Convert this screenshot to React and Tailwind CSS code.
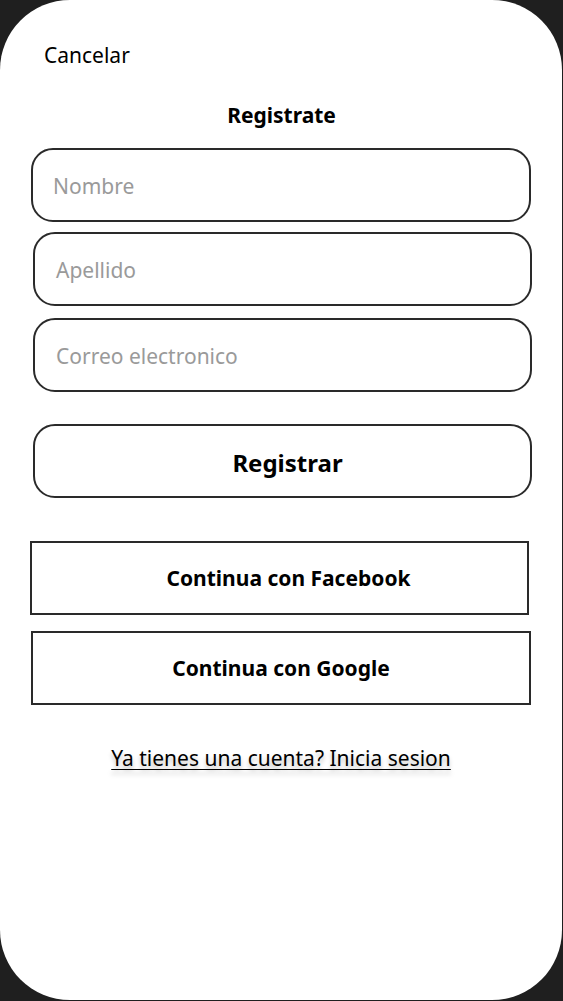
import React from "react";

const font = { fontFamily: '"Noto Sans", "Open Sans", sans-serif' };

function Field({ label, className }) {
  return (
    <div
      className={`h-[74px] rounded-[22px] border-2 border-[#2a2a2a] flex items-center pt-[3px] text-[21px] text-[#9a9a9a] ${className}`}
    >
      {label}
    </div>
  );
}

export default function App() {
  return (
    <div className="w-full h-[1001px] bg-[#1f1f1f] overflow-hidden" style={font}>
      <div className="w-[562px] h-[1000px] bg-white rounded-[70px] flex flex-col">
        <div className="pt-[41px] pl-[44px] text-[21px] leading-[28px] text-black">Cancelar</div>
        <div className="mt-[32px] text-center text-[21px] leading-[28px] font-bold text-black pl-[1px]">
          Registrate
        </div>
        <Field label="Nombre" className="mt-[19px] ml-[31px] w-[500px] pl-[20px]" />
        <Field label="Apellido" className="mt-[10px] ml-[33px] w-[499px] pl-[21px]" />
        <Field label="Correo electronico" className="mt-[12px] ml-[33px] w-[499px] pl-[21px]" />
        <div className="mt-[32px] ml-[33px] w-[499px] h-[74px] rounded-[22px] border-2 border-[#2a2a2a] flex items-center justify-center pt-[3px] text-[24px] font-bold text-black pl-[10px]">
          Registrar
        </div>
        <div className="mt-[43px] ml-[30px] w-[499px] h-[74px] border-2 border-[#2a2a2a] flex items-center justify-center pt-[2px] text-[21px] font-bold text-black pl-[18px]">
          Continua con Facebook
        </div>
        <div className="mt-[16px] ml-[31px] w-[500px] h-[74px] border-2 border-[#2a2a2a] flex items-center justify-center pt-[2px] text-[21px] font-bold text-black">
          Continua con Google
        </div>
        <div className="mt-[39px] text-center">
          <span className="text-[21px] leading-[28px] text-black underline underline-offset-[3px] decoration-[1px] [text-shadow:0_4px_4px_rgba(0,0,0,0.25)]">
            Ya tienes una cuenta? Inicia sesion
          </span>
        </div>
      </div>
    </div>
  );
}
